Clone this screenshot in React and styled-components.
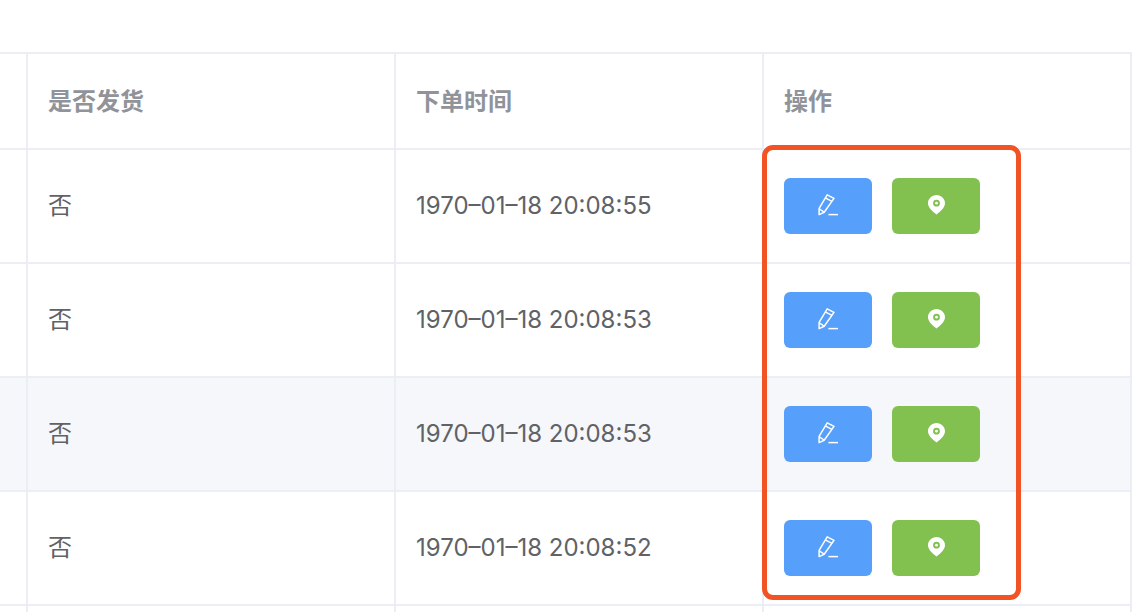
import React from 'react';
import styled, { createGlobalStyle } from 'styled-components';

const Global = createGlobalStyle`
  html, body { margin: 0; padding: 0; background: #fff; }
  body { font-family: "Inter", "Noto Sans CJK SC", sans-serif; overflow: hidden; }
`;
const Page = styled.div`
  position: relative;
  width: 1148px;
  height: 612px;
  padding-top: 52px;
  box-sizing: border-box;
  overflow: hidden;
`;
const Table = styled.div`
  display: grid;
  grid-template-columns: 28px 368px 368px 368px;
  grid-auto-rows: auto;
  width: 1132px;
`;
const Row = styled.div`
  display: contents;
`;
const Cell = styled.div`
  box-sizing: border-box;
  height: ${p => (p.$head ? 98 : 114)}px;
  border-right: 2px solid #ebeef5;
  border-bottom: 2px solid #ebeef5;
  border-top: ${p => (p.$head ? '2px solid #ebeef5' : 'none')};
  background: ${p => (p.$hl ? '#f5f7fa' : '#fff')};
  padding-left: 20px;
  display: flex;
  align-items: center;
  gap: 20px;
  color: ${p => (p.$head ? '#909399' : '#606266')};
`;
const Stub = styled(Cell)`
  padding-left: 0;
`;
const HeadLabel = styled.span`
  font-family: "Noto Sans CJK SC", sans-serif;
  font-size: 24px;
  font-weight: 700;
  padding-bottom: 3px;
`;
const Label = styled.span`
  font-family: "Noto Sans CJK SC", sans-serif;
  font-size: 24px;
  padding-bottom: 6px;
`;
const Time = styled.span`
  font-family: "Inter", "Liberation Sans", sans-serif;
  font-size: 24px;
  letter-spacing: 0;
  padding-bottom: 2px;
`;
const Btn = styled.div`
  width: 88px;
  height: 56px;
  border-radius: 6px;
  background: ${p => p.$color};
  display: flex;
  align-items: center;
  justify-content: center;
`;
const Highlight = styled.div`
  position: absolute;
  left: 762px;
  top: 145px;
  width: 259px;
  height: 455px;
  box-sizing: border-box;
  border: 5.5px solid #f15324;
  border-radius: 11px;
  pointer-events: none;
`;
const PinSvg = styled.svg`
  margin-bottom: 3px;
`;

const EditIcon = () => (
  <svg width="20" height="24" viewBox="0 0 20 24" fill="none" stroke="#fff" strokeWidth="1.5">
    <path d="M9.2 0.8 L16 4.4 L6.2 18.2 L1.1 20.6 L1.1 14.4 Z" strokeLinejoin="round" />
    <path d="M7.2 3.8 L14 7.4 M1.3 14.8 L6 18" />
    <path d="M10.4 20.6 H20" />
  </svg>
);
const PinIcon = () => (
  <PinSvg width="17" height="20" viewBox="0 0 17 20">
    <path fillRule="evenodd" fill="#fff" d="M8.5 0 C3.8 0 0 3.7 0 8.2 C0 12 3.6 15.9 8.5 19.4 C13.4 15.9 17 12 17 8.2 C17 3.7 13.2 0 8.5 0 Z M8.5 4.8 A3.4 3.4 0 1 1 8.5 11.6 A3.4 3.4 0 1 1 8.5 4.8 Z" />
    <circle cx="8.5" cy="8.2" r="1.4" fill="#fff" />
  </PinSvg>
);

const rows = [
  { time: '1970–01–18 20:08:55' },
  { time: '1970–01–18 20:08:53' },
  { time: '1970–01–18 20:08:53', hl: true },
  { time: '1970–01–18 20:08:52' },
];

export default function App() {
  return (
    <Page>
      <Global />
      <Table>
        <Row>
          <Stub $head />
          <Cell $head><HeadLabel>是否发货</HeadLabel></Cell>
          <Cell $head><HeadLabel>下单时间</HeadLabel></Cell>
          <Cell $head><HeadLabel>操作</HeadLabel></Cell>
        </Row>
        {rows.map((r, i) => (
          <Row key={i}>
            <Stub $hl={r.hl} />
            <Cell $hl={r.hl}><Label>否</Label></Cell>
            <Cell $hl={r.hl}><Time>{r.time}</Time></Cell>
            <Cell $hl={r.hl}>
              <Btn $color="#569ffb"><EditIcon /></Btn>
              <Btn $color="#82c150"><PinIcon /></Btn>
            </Cell>
          </Row>
        ))}
        <Row>
          <Stub />
          <Cell />
          <Cell />
          <Cell />
        </Row>
      </Table>
      <Highlight />
    </Page>
  );
}
